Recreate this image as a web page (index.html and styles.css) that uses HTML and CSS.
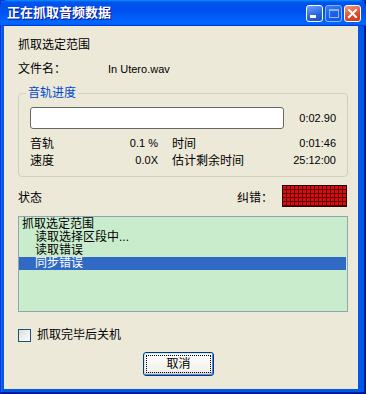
FILE: index.html
```html
<!DOCTYPE html>
<html lang="zh-CN">
<head>
    <meta charset="UTF-8">
    <meta name="viewport" content="width=device-width, initial-scale=1.0">
    <title>正在抓取音频数据</title>
    <link rel="stylesheet" href="styles.css">
</head>
<body>
    <div class="window">
        <div class="titlebar">
            <span class="title">正在抓取音频数据</span>
            <div class="controls">
                <span class="ctl min"><i></i></span>
                <span class="ctl max"><i></i></span>
                <span class="ctl close">
                    <svg width="15" height="15" viewBox="0 0 15 15"><path d="M4 4 L11 11 M11 4 L4 11" stroke="#fff" stroke-width="2" stroke-linecap="square"/></svg>
                </span>
            </div>
        </div>

        <div class="content">
            <div class="line">抓取选定范围</div>
            <div class="line file">
                <span class="file-label">文件名：</span>
                <span class="latin">In Utero.wav</span>
            </div>

            <div class="group">
                <span class="group-title">音轨进度</span>
                <div class="prog-row">
                    <div class="progress"></div>
                    <span class="latin">0:02.90</span>
                </div>
                <div class="stat-row">
                    <span class="key">音轨</span>
                    <span class="val latin">0.1 %</span>
                    <span class="key2">时间</span>
                    <span class="latin">0:01:46</span>
                </div>
                <div class="stat-row">
                    <span class="key">速度</span>
                    <span class="val latin">0.0X</span>
                    <span class="key2">估计剩余时间</span>
                    <span class="latin">25:12:00</span>
                </div>
            </div>

            <div class="status-row">
                <span class="status-label">状态</span>
                <span>纠错：</span>
                <div class="ecc"></div>
            </div>

            <ul class="listbox">
                <li>抓取选定范围</li>
                <li class="sub">读取选择区段中...</li>
                <li class="sub">读取错误</li>
                <li class="sub selected">同步错误</li>
            </ul>

            <label class="check">
                <span class="box"></span>
                抓取完毕后关机
            </label>

            <div class="actions">
                <button class="btn"><span>取消</span></button>
            </div>
        </div>
    </div>
</body>
</html>
```

FILE: styles.css
```css
* {
    margin: 0;
    padding: 0;
    box-sizing: border-box;
}

body {
    width: 366px;
    height: 394px;
    overflow: hidden;
    font-family: "Liberation Sans", "Noto Sans CJK SC", sans-serif;
    font-size: 12px;
    color: #000;
}

.window {
    width: 366px;
    height: 394px;
    display: flex;
    flex-direction: column;
    background: #0058e6;
    box-shadow: inset -1px -1px #00138c, inset 1px 1px #0831d9, inset -2px -2px #001ea0, inset 2px 2px #166aee;
}

.titlebar {
    height: 26px;
    display: flex;
    align-items: center;
    justify-content: space-between;
    padding: 0 5px 0 7px;
    border-radius: 7px 7px 0 0;
    background: linear-gradient(180deg, #0997ff, #0053ee 8%, #0050ee 40%, #0066ff 88%, #0066ff 93%, #005bff 95%, #003dd7 96%, #003dd7);
}

.title {
    color: #fff;
    font-size: 13px;
    font-weight: bold;
    line-height: 16px;
    text-shadow: 1px 1px #0f1089;
}

.controls {
    display: flex;
    gap: 2px;
}

.ctl {
    width: 17px;
    height: 17px;
    border: 1px solid #fff;
    border-radius: 3px;
    display: flex;
    align-items: center;
    justify-content: center;
    background: linear-gradient(160deg, #6ea3ff, #2663e0 60%, #1d4fc9);
}

.ctl.min {
    align-items: flex-end;
    justify-content: flex-start;
    padding: 0 0 3px 3px;
}

.ctl.min i {
    width: 6px;
    height: 3px;
    background: #fff;
}

.ctl.max {
    opacity: 0.55;
}

.ctl.max i {
    width: 10px;
    height: 9px;
    border: 1px solid #fff;
    border-top-width: 2px;
}

.ctl.close {
    background: linear-gradient(160deg, #f49a7d, #e0512f 55%, #c8381a);
}

.content {
    flex: 1;
    margin: 0 8px 5px 4px;
    background: #ece9d8;
    padding: 11px 10px 0 14px;
    display: flex;
    flex-direction: column;
}

.line {
    line-height: 16px;
}

.file {
    margin-top: 8px;
    display: flex;
}

.file-label {
    width: 90px;
}

.latin {
    font-size: 11px;
}

.group {
    position: relative;
    margin-top: 16px;
    border: 1px solid #d0d0bf;
    border-radius: 4px;
    padding: 13px 11px 8px 11px;
}

.group-title {
    position: absolute;
    top: -9px;
    left: 7px;
    padding: 0 2px;
    background: #ece9d8;
    color: #0046d5;
    line-height: 16px;
}

.prog-row {
    display: flex;
    align-items: center;
    justify-content: space-between;
}

.progress {
    width: 254px;
    height: 22px;
    background: #fff;
    border: 1px solid #686868;
    border-radius: 3px;
}

.stat-row {
    display: flex;
    align-items: center;
    height: 17px;
}

.prog-row + .stat-row {
    margin-top: 5px;
}

.key {
    width: 60px;
}

.val {
    width: 68px;
    text-align: right;
}

.key2 {
    flex: 1;
    margin-left: 14px;
}

.status-row {
    display: flex;
    align-items: center;
    margin-top: 8px;
    height: 22px;
}

.status-label {
    flex: 1;
}

.ecc {
    width: 65px;
    height: 22px;
    margin: 0 1px 0 9px;
    border: 1px solid #2a0000;
    background:
        linear-gradient(90deg, transparent 3px, #600000 3px) 0 0 / 4px 4px,
        linear-gradient(transparent 3px, #600000 3px) 0 0 / 4px 4px,
        #dc0c0c;
}

.listbox {
    list-style: none;
    margin-top: 9px;
    height: 96px;
    border: 1px solid #8fa5b3;
    background: #c9eccd;
    padding-top: 1px;
}

.listbox li {
    height: 13px;
    line-height: 13px;
    padding-left: 3px;
    margin-right: 1px;
}

.listbox li.sub {
    padding-left: 16px;
}

.listbox li.selected {
    background: #316ac5;
    color: #fff;
}

.check {
    display: flex;
    align-items: center;
    gap: 6px;
    margin-top: 17px;
    line-height: 13px;
}

.box {
    width: 13px;
    height: 13px;
    border: 1px solid #1c5180;
    background: linear-gradient(135deg, #dcdcd7, #fff);
}

.actions {
    margin-top: 10px;
    padding-left: 125px;
}

.btn {
    width: 71px;
    height: 24px;
    padding: 2px;
    font: inherit;
    border: 1px solid #003c74;
    border-radius: 3px;
    background: linear-gradient(180deg, #fff, #f2f1ea 80%, #d6d0c5);
    box-shadow: inset 1px 1px #cee7ff, inset -1px -1px #6982ee;
}

.btn span {
    display: block;
    height: 100%;
    line-height: 16px;
    border: 1px dotted #000;
}
```
